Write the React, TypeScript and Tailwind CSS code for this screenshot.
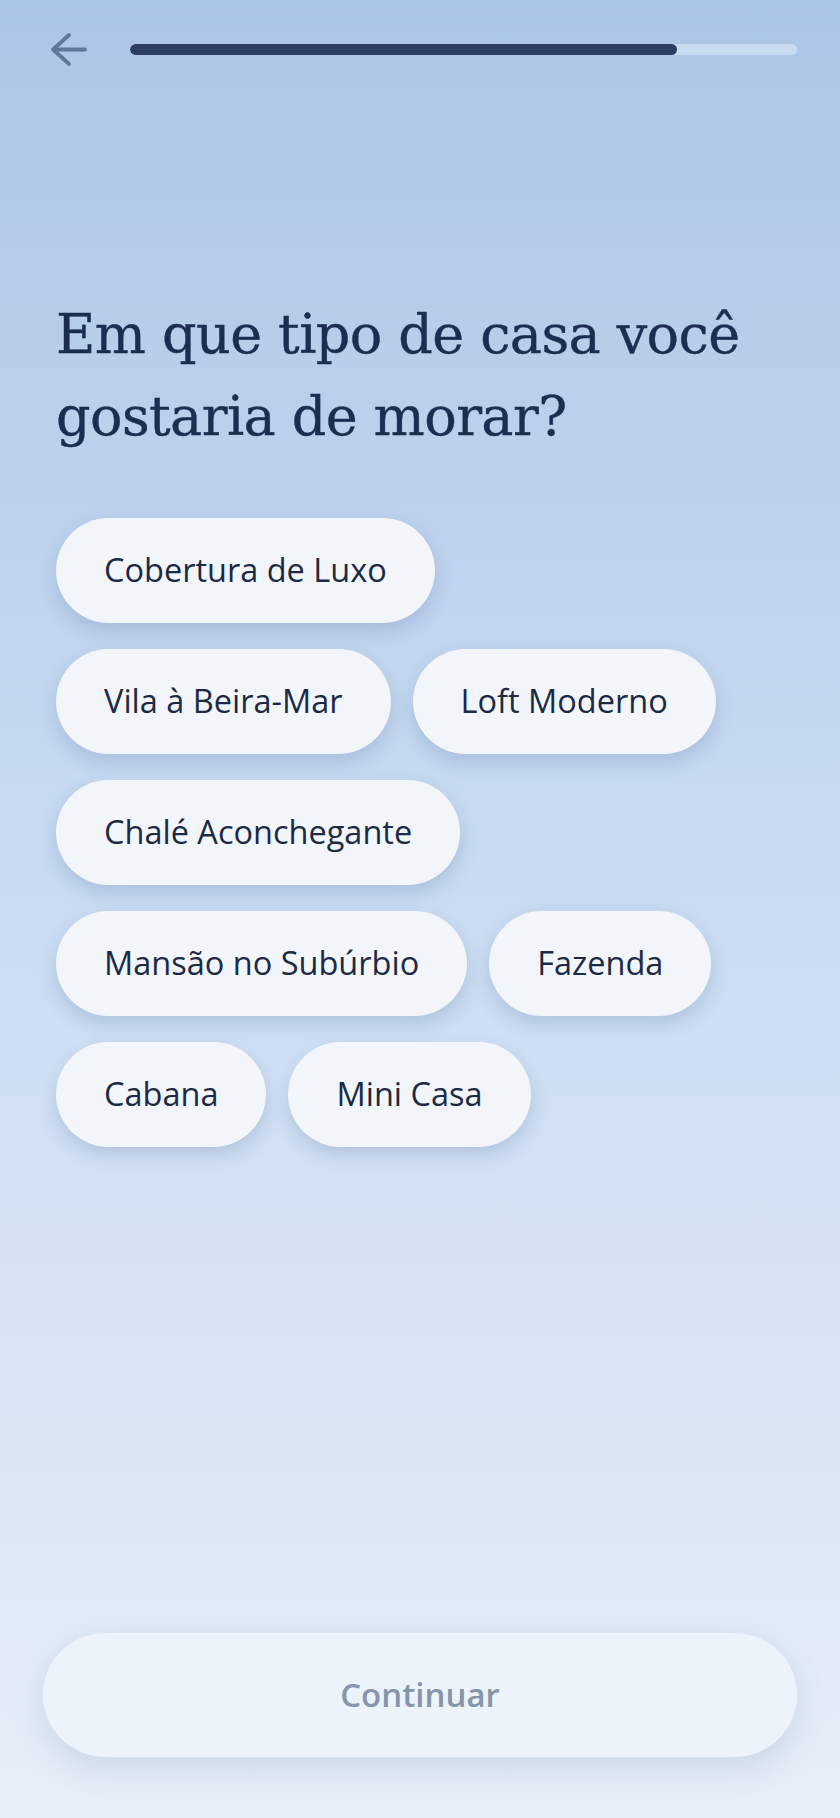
const options = [
  'Cobertura de Luxo',
  'Vila à Beira-Mar',
  'Loft Moderno',
  'Chalé Aconchegante',
  'Mansão no Subúrbio',
  'Fazenda',
  'Cabana',
  'Mini Casa',
];

function BackArrow() {
  return (
    <svg width="40" height="37" viewBox="0 0 40 37" fill="none" className="shrink-0">
      <path
        d="M20 4 L4 18.5 L20 33 M4 18.5 H36"
        stroke="#5f7899"
        strokeWidth="3.8"
        strokeLinecap="round"
        strokeLinejoin="round"
      />
    </svg>
  );
}

export default function App() {
  const progress = 82;

  return (
    <div className="min-h-screen flex flex-col bg-linear-to-b from-[#acc6e7] via-[#cadcf2] to-[#e7eef7] font-['Open_Sans','Noto_Sans',sans-serif]">
      {/* top bar */}
      <div className="flex items-center pl-[49px] pr-[43px] pt-[31px]">
        <BackArrow />
        <div className="ml-[41px] flex-1 h-[11px] rounded-full bg-[#c9dbf0] overflow-hidden">
          <div className="h-full rounded-full bg-[#2c3e62]" style={{ width: `${progress}%` }} />
        </div>
      </div>

      <div className="px-[56px]">
        <h1 className="mt-[226px] text-[54px] leading-[82px] text-[#1b2d50] font-['DejaVu_Serif','Liberation_Serif',serif] tracking-[-0.6px] [-webkit-text-stroke:0.4px_#1b2d50]">
          Em que tipo de casa você gostaria de morar?
        </h1>

        <div className="mt-[60px] flex flex-wrap max-w-[700px] gap-x-[22px] gap-y-[26px]">
          {options.map((o) => (
            <button
              key={o}
              className="h-[105px] px-[48px] rounded-full bg-[#f2f6fb] text-[32.5px] text-[#1c2a45] shadow-[0_8px_18px_rgba(70,100,150,0.22)] flex items-center"
            >
              {o}
            </button>
          ))}
        </div>
      </div>

      <div className="mt-auto px-[43px] pb-[61px]">
        <button className="w-full h-[124px] rounded-full bg-[#edf3fb] text-[33px] font-semibold text-[#8595ac] shadow-[0_12px_32px_rgba(80,110,150,0.16)]">
          Continuar
        </button>
      </div>
    </div>
  );
}
